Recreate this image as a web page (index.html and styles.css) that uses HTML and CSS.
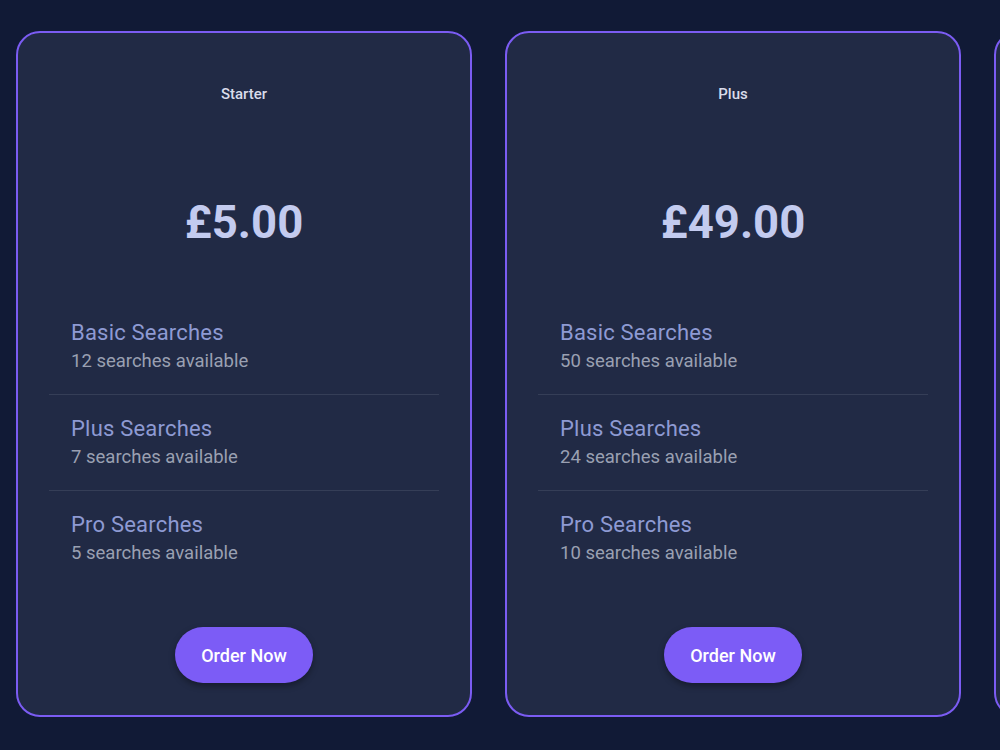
FILE: index.html
```html
<!DOCTYPE html>
<html lang="en">
<head>
  <meta charset="UTF-8">
  <title>Pricing</title>
  <link rel="stylesheet" href="styles.css">
</head>
<body>
  <div class="plans">
    <div class="plan">
      <h2 class="plan-name">Starter</h2>
      <div class="price">£5.00</div>
      <ul class="features">
        <li>
          <span class="feature-name">Basic Searches</span>
          <span class="feature-count">12 searches available</span>
        </li>
        <li>
          <span class="feature-name">Plus Searches</span>
          <span class="feature-count">7 searches available</span>
        </li>
        <li>
          <span class="feature-name">Pro Searches</span>
          <span class="feature-count">5 searches available</span>
        </li>
      </ul>
      <button class="order-btn">Order Now</button>
    </div>

    <div class="plan">
      <h2 class="plan-name">Plus</h2>
      <div class="price">£49.00</div>
      <ul class="features">
        <li>
          <span class="feature-name">Basic Searches</span>
          <span class="feature-count">50 searches available</span>
        </li>
        <li>
          <span class="feature-name">Plus Searches</span>
          <span class="feature-count">24 searches available</span>
        </li>
        <li>
          <span class="feature-name">Pro Searches</span>
          <span class="feature-count">10 searches available</span>
        </li>
      </ul>
      <button class="order-btn">Order Now</button>
    </div>

    <div class="plan">
      <h2 class="plan-name">Pro</h2>
      <div class="price">£99.00</div>
      <ul class="features">
        <li>
          <span class="feature-name">Basic Searches</span>
          <span class="feature-count">120 searches available</span>
        </li>
        <li>
          <span class="feature-name">Plus Searches</span>
          <span class="feature-count">60 searches available</span>
        </li>
        <li>
          <span class="feature-name">Pro Searches</span>
          <span class="feature-count">25 searches available</span>
        </li>
      </ul>
      <button class="order-btn">Order Now</button>
    </div>
  </div>
</body>
</html>
```

FILE: styles.css
```css
* { box-sizing: border-box; }

html, body {
  height: 100%;
}

body {
  margin: 0;
  background: #111a36;
  font-family: Roboto, 'Liberation Sans', sans-serif;
  overflow: hidden;
}

.plans {
  display: flex;
  gap: 33px;
  padding: 31px 16px;
}

.plan {
  flex: 0 0 456px;
  height: 686px;
  background: #212a45;
  border: 2px solid #7b5cf3;
  border-radius: 24px;
  padding: 51px 31px 32px;
  display: flex;
  flex-direction: column;
  align-items: center;
}

.plan-name {
  margin: 0;
  font-size: 15px;
  line-height: 20px;
  font-weight: 500;
  color: #d9dcea;
}

.price {
  margin-top: 93px;
  font-size: 45.5px;
  line-height: 52px;
  font-weight: 700;
  color: #c3cbef;
}

.features {
  list-style: none;
  margin: 50px 0 0;
  padding: 0;
  width: 100%;
}

.features li {
  display: flex;
  flex-direction: column;
  padding: 20px 22px 21px;
  border-bottom: 1px solid #353e57;
}

.features li:last-child {
  border-bottom: none;
}

.feature-name {
  font-size: 22px;
  line-height: 28px;
  letter-spacing: 0.2px;
  color: #8e9ad3;
}

.feature-count {
  margin-top: 2px;
  font-size: 18.5px;
  line-height: 24px;
  color: #9aa0b2;
}

.order-btn {
  margin-top: auto;
  width: 138px;
  height: 56px;
  border: none;
  border-radius: 28px;
  background: #7c5cf6;
  color: #fff;
  font-family: Roboto, 'Liberation Sans', sans-serif;
  font-size: 18px;
  font-weight: 500;
  cursor: pointer;
  box-shadow: 0 3px 6px rgba(0, 0, 0, 0.35);
}

.order-btn:hover {
  background: #6c4de6;
}
```
